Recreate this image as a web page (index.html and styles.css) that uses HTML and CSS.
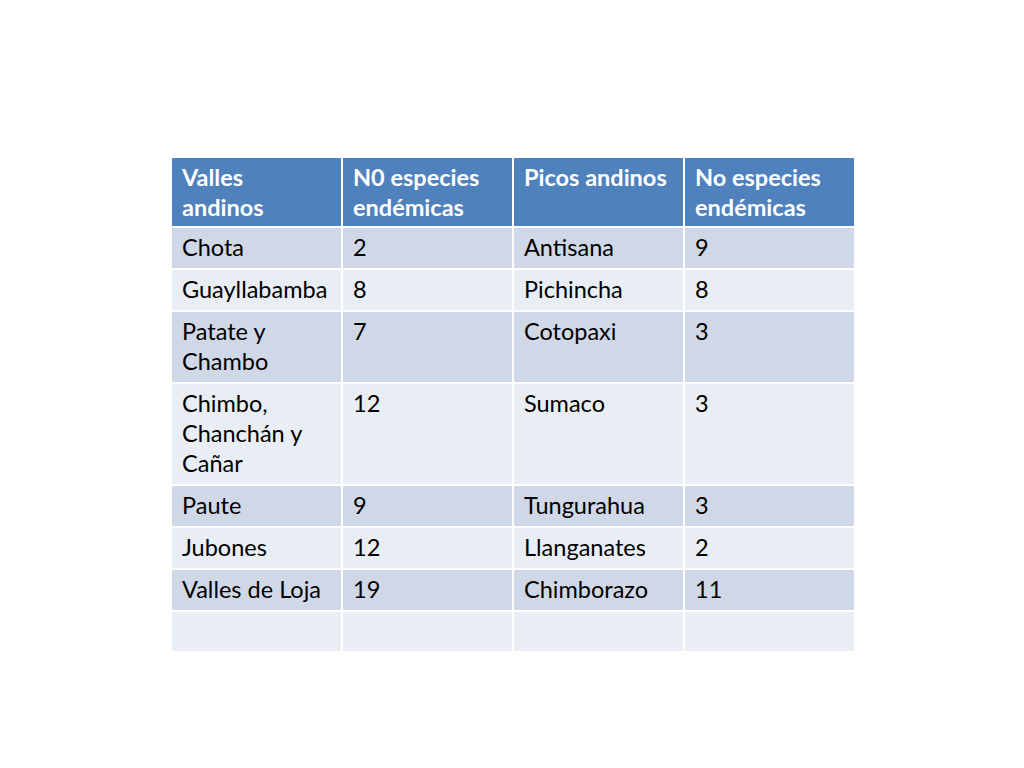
FILE: index.html
```html
<!DOCTYPE html>
<html lang="es">
<head>
<meta charset="utf-8">
<title>Valles y picos andinos</title>
<link rel="stylesheet" href="styles.css">
</head>
<body>
<div class="slide">
  <table class="data">
    <colgroup><col class="c"><col class="c"><col class="c"><col class="c"></colgroup>
    <thead>
      <tr><th>Valles<br>andinos</th><th>N0 especies<br>endémicas</th><th>Picos andinos</th><th>No especies<br>endémicas</th></tr>
    </thead>
    <tbody>
      <tr class="odd"><td>Chota</td><td>2</td><td>Antisana</td><td>9</td></tr>
      <tr class="even"><td>Guayllabamba</td><td>8</td><td>Pichincha</td><td>8</td></tr>
      <tr class="odd"><td>Patate y<br>Chambo</td><td>7</td><td>Cotopaxi</td><td>3</td></tr>
      <tr class="even"><td>Chimbo,<br>Chanchán y<br>Cañar</td><td>12</td><td>Sumaco</td><td>3</td></tr>
      <tr class="odd"><td>Paute</td><td>9</td><td>Tungurahua</td><td>3</td></tr>
      <tr class="even"><td>Jubones</td><td>12</td><td>Llanganates</td><td>2</td></tr>
      <tr class="odd"><td>Valles de Loja</td><td>19</td><td>Chimborazo</td><td>11</td></tr>
      <tr class="even"><td>&nbsp;</td><td>&nbsp;</td><td>&nbsp;</td><td>&nbsp;</td></tr>
    </tbody>
  </table>
</div>
</body>
</html>
```

FILE: styles.css
```css
html, body {
  margin: 0;
  padding: 0;
  background: #ffffff;
}
.slide {
  width: 1024px;
  height: 768px;
  padding: 156px 0 0 170px;
  box-sizing: border-box;
}
.data {
  border-collapse: collapse;
  table-layout: fixed;
  width: 685px;
  font-family: "Lato", "Open Sans", sans-serif;
  font-size: 23.5px;
  color: #000000;
}
.data col.c { width: 171px; }
.data th, .data td {
  border: 2px solid #ffffff;
  text-align: left;
  vertical-align: top;
  padding: 4px 6px 6px 10px;
  line-height: 30px;
  white-space: nowrap;
}
.data th {
  background: #4f81bd;
  color: #ffffff;
  font-weight: bold;
  padding-bottom: 4px;
}
.data tr.odd td { background: #d0d8e8; }
.data tr.even td { background: #e9edf4; }
.data tr:last-child td { padding-bottom: 5px; }
```
